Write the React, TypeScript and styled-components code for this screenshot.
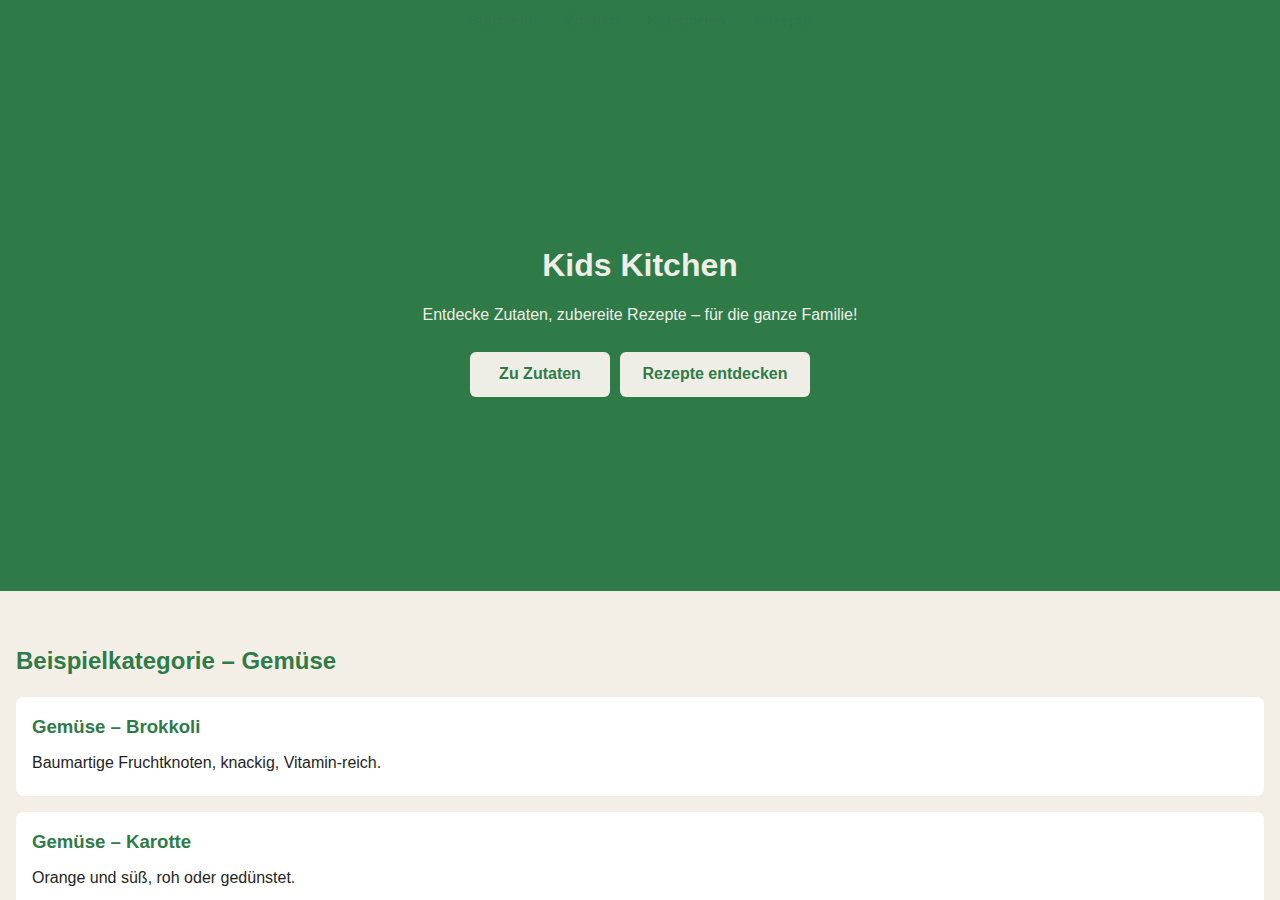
import React from 'react';
import styled, { createGlobalStyle } from 'styled-components';

const GlobalStyle = createGlobalStyle`
  * {
    box-sizing: border-box;
  }
  body {
    margin: 0;
    background: #f3efe7;
    font-family: "Liberation Sans", Arial, sans-serif;
    color: #1f1f1f;
  }
`;

const navItems = ['Startseite', 'Zutaten', 'Kategorien', 'Rezepte'];

const vegetables = [
  { name: 'Brokkoli', text: 'Baumartige Fruchtknoten, knackig, Vitamin-reich.' },
  { name: 'Karotte', text: 'Orange und süß, roh oder gedünstet.' },
];

const App = () => {
  return (
    <>
      <GlobalStyle />
      <Hero>
        <Nav>
          <ul>
            {navItems.map((item) => (
              <li key={item}>
                <a href="#">{item}</a>
              </li>
            ))}
          </ul>
        </Nav>
        <HeroInner>
          <Title>Kids Kitchen</Title>
          <Tagline>Entdecke Zutaten, zubereite Rezepte – für die ganze Familie!</Tagline>
          <Actions>
            <Button $width={140}>Zu Zutaten</Button>
            <Button $width={190}>Rezepte entdecken</Button>
          </Actions>
        </HeroInner>
      </Hero>
      <Section>
        <SectionTitle>Beispielkategorie – Gemüse</SectionTitle>
        <CardList>
          {vegetables.map((veg) => (
            <Card key={veg.name}>
              <CardTitle>Gemüse – {veg.name}</CardTitle>
              <CardText>{veg.text}</CardText>
            </Card>
          ))}
        </CardList>
      </Section>
    </>
  );
};

export default App;

const Hero = styled.header`
  height: 591px;
  background: #2f7b48;
  display: flex;
  flex-direction: column;
`;

const Nav = styled.nav`
  ul {
    display: flex;
    justify-content: center;
    gap: 28px;
    list-style: none;
    margin: 0;
    padding: 11px 0;
    li {
      a {
        font-size: 15px;
        line-height: 18px;
        font-weight: 700;
        color: #2e7847;
        text-decoration: none;
      }
    }
  }
`;

const HeroInner = styled.div`
  flex: 1;
  display: flex;
  flex-direction: column;
  align-items: center;
  justify-content: center;
  padding-top: 10px;
  text-align: center;
`;

const Title = styled.h1`
  margin: 0;
  font-size: 32px;
  line-height: 40px;
  font-weight: 700;
  color: #eeeee6;
`;

const Tagline = styled.p`
  margin: 19px 0 0;
  font-size: 16px;
  line-height: 22px;
  color: #eeeee6;
`;

const Actions = styled.div`
  display: flex;
  gap: 10px;
  margin-top: 26px;
`;

const Button = styled.button<{ $width: number }>`
  width: ${(p) => p.$width}px;
  height: 45px;
  border: none;
  border-radius: 6px;
  background: #eeeee6;
  color: #2f7b48;
  font-family: inherit;
  font-size: 16px;
  font-weight: 700;
  cursor: pointer;
`;

const Section = styled.main`
  padding: 56px 16px 32px;
`;

const SectionTitle = styled.h2`
  margin: 0 0 22px;
  font-size: 24px;
  line-height: 28px;
  font-weight: 700;
  color: #2f7b48;
`;

const CardList = styled.div`
  display: flex;
  flex-direction: column;
  gap: 16px;
`;

const Card = styled.article`
  background: #ffffff;
  border-radius: 8px;
  padding: 16px 16px 20px;
`;

const CardTitle = styled.h3`
  margin: 0;
  font-size: 18.6px;
  line-height: 27px;
  font-weight: 700;
  color: #2f7b48;
`;

const CardText = styled.p`
  margin: 10px 0 0;
  font-size: 16px;
  line-height: 25.6px;
  color: #1f1f1f;
`;
